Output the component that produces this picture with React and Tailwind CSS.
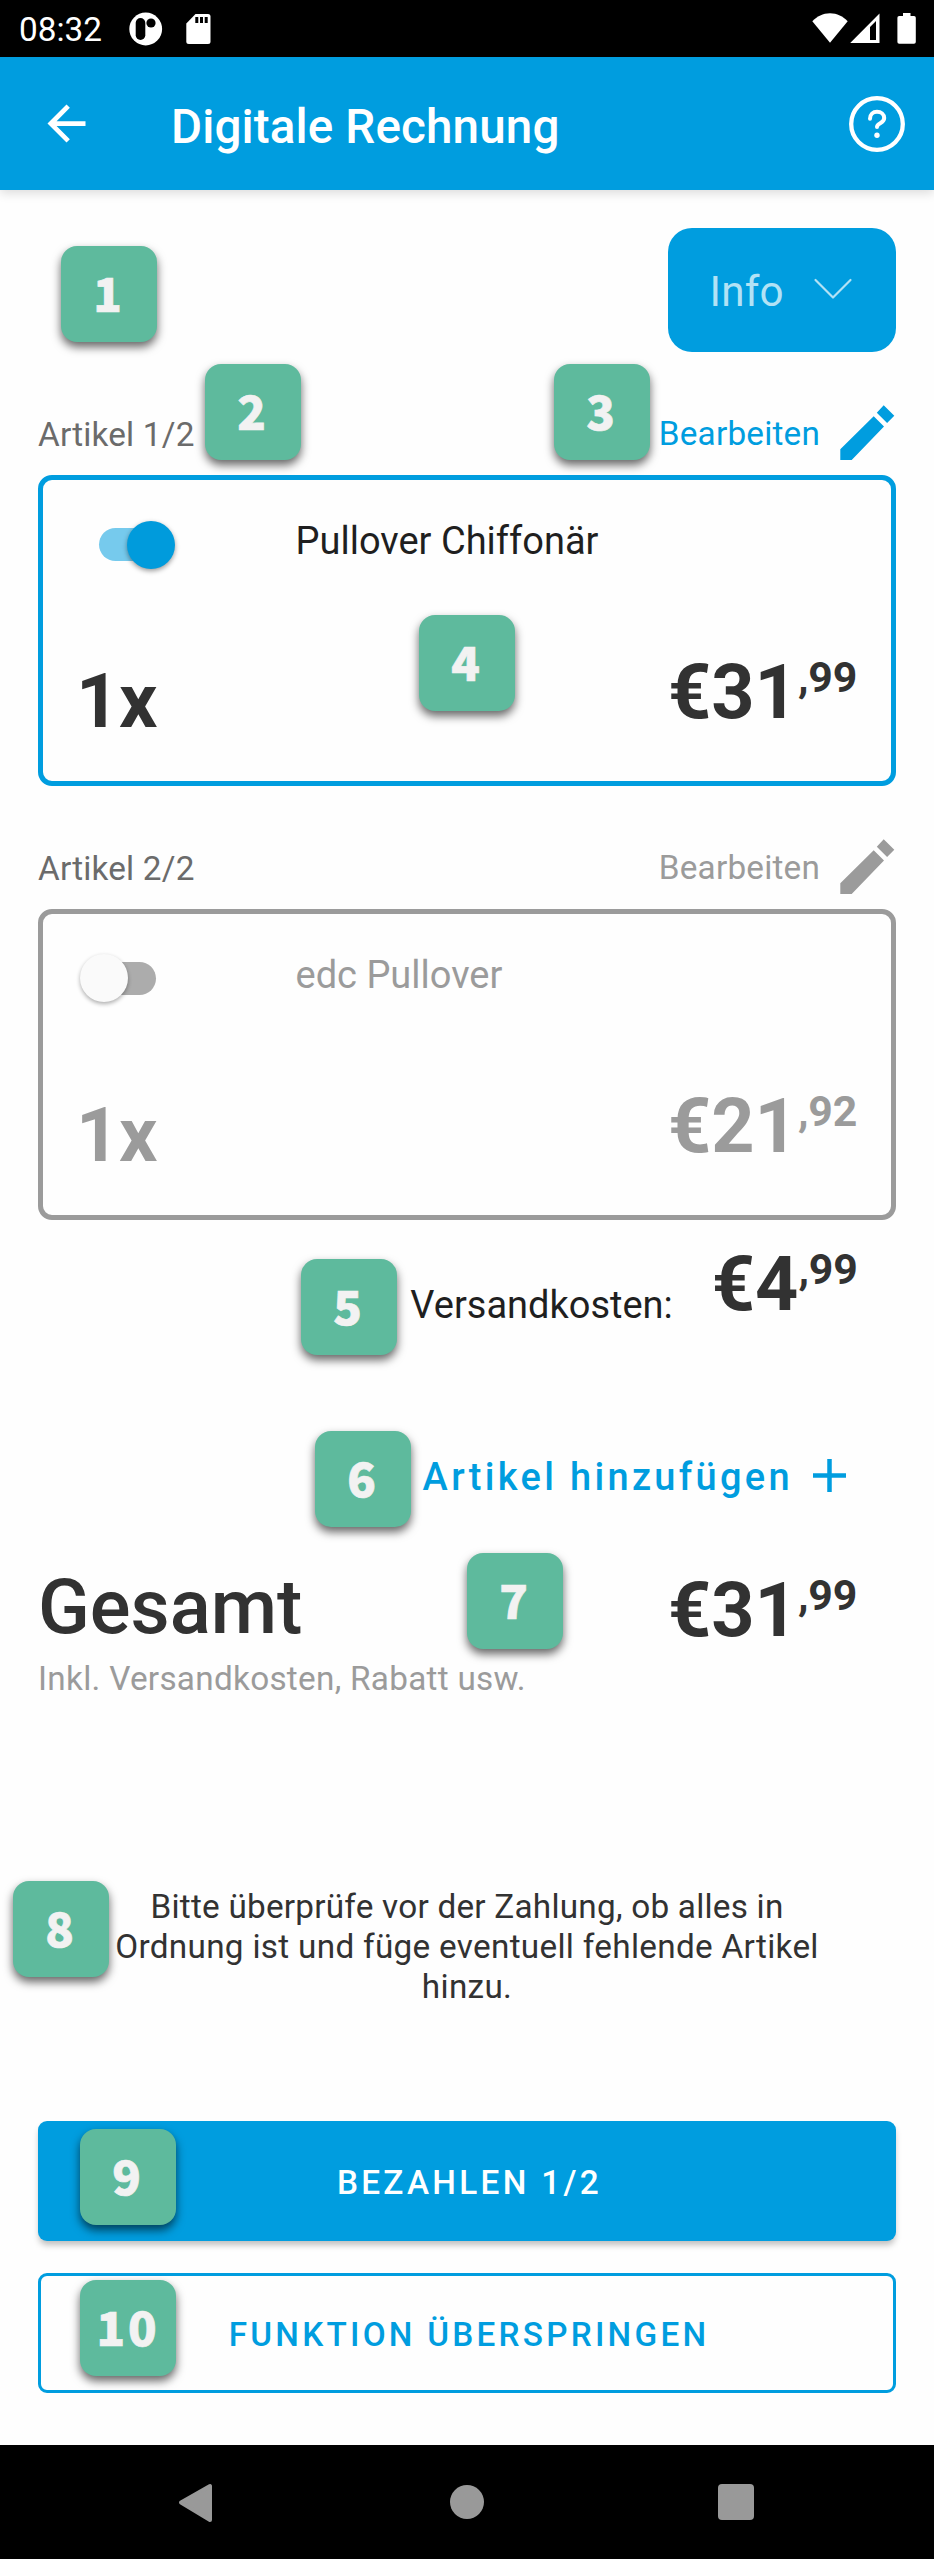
const badges = [
  { n: 1, pos: "left-[61px] top-[246px]" },
  { n: 2, pos: "left-[205px] top-[364px]" },
  { n: 3, pos: "left-[554px] top-[364px]" },
  { n: 4, pos: "left-[419px] top-[615px]" },
  { n: 5, pos: "left-[301px] top-[1259px]" },
  { n: 6, pos: "left-[315px] top-[1431px]" },
  { n: 7, pos: "left-[467px] top-[1553px]" },
  { n: 8, pos: "left-[13px] top-[1881px]" },
  { n: 9, pos: "left-[80px] top-[2129px]" },
  { n: 10, pos: "left-[80px] top-[2280px]" },
];

function Badge({ n, pos }) {
  return (
    <div
      className={`absolute ${pos} flex h-24 w-24 justify-center rounded-[16px] bg-[#5eba9d] pt-[16px] font-['Noto_Sans_CJK_SC',sans-serif] text-[47px] leading-[60px] font-black tracking-[3px] text-[#f2f2f2] shadow-[0_5px_10px_rgba(0,0,0,0.6)] [-webkit-text-stroke:0.7px_#f2f2f2]`}
    >
      {n}
    </div>
  );
}

function StatusBar() {
  return (
    <div className="flex h-[57px] items-start bg-black pl-[19px] text-white">
      <span className="w-[110px] pt-[10px] text-[33.3px] leading-[40px]">08:32</span>
      <svg className="mt-3 h-[34px] w-[34px]" viewBox="0 0 34 34">
        <circle cx="16.7" cy="17" r="16.4" fill="#fff" />
        <rect x="6.7" y="6" width="9.6" height="22" rx="4.8" fill="#000" />
        <circle cx="22" cy="11" r="4.6" fill="#000" />
      </svg>
      <svg className="mt-[14px] ml-[23px] h-[30px] w-[25px]" viewBox="0 0 25 30">
        <path d="M9.5 0H22a2.5 2.5 0 0 1 2.5 2.5v25A2.5 2.5 0 0 1 22 30H2.800a2.500 2.500 0 0 1-2.500-2.500V9.500z" fill="#fff" />
        <path d="M9.300 3h3v6h-3zM14 3h3v6h-3zM18.700 3h3v6h-3z" fill="#000" />
      </svg>
      <svg className="mt-[13px] ml-auto h-[30px] w-[36px]" viewBox="0 0 36 30">
        <path d="M18 29.700L.3 8.300C5 3.500 11 .3 18 .3s13 3.200 17.700 8z" fill="#fff" />
      </svg>
      <svg className="mt-[13px] ml-[2px] h-[30px] w-[31px]" viewBox="0 0 31 30">
        <path fillRule="evenodd" d="M.2 30L29.500.5V30zM20 14v13h6V8z" fill="#fff" />
      </svg>
      <svg className="mt-[13px] mr-[18px] ml-[16px] h-[31px] w-[19px]" viewBox="0 0 19 31">
        <path d="M6 0h7.500v3H17a1.800 1.800 0 0 1 1.800 1.800V29a1.800 1.800 0 0 1-1.800 1.800H2.200A1.800 1.800 0 0 1 .4 29V4.800A1.800 1.800 0 0 1 2.200 3H6z" fill="#fff" />
      </svg>
    </div>
  );
}

function AppBar() {
  return (
    <div className="flex h-[133px] items-center bg-[#009ddf] pl-[38px] pr-[27px] text-white shadow-[0_3px_10px_rgba(0,0,0,0.14)]">
      <svg className="h-[57px] w-[57px]" viewBox="0 0 24 24">
        <path d="M20 11H7.830l5.590-5.590L12 4l-8 8 8 8 1.410-1.410L7.830 13H20v-2z" fill="#fff" />
      </svg>
      <h1 className="mt-[6px] ml-[76px] text-[47.6px] leading-[60px] font-medium tracking-[0.12px]">Digitale Rechnung</h1>
      <svg className="ml-auto h-[60px] w-[60px]" viewBox="0 0 60 60" fill="none" stroke="#fff">
        <circle cx="30" cy="30" r="25.800" strokeWidth="4.300" />
        <path d="M23 24.800c0-4.500 3-7 7-7s7.200 2.500 7.200 6.300c0 5.700-7.200 4.600-7.200 9" strokeWidth="4" strokeLinecap="round" />
        <circle cx="30" cy="41.300" r="2.700" fill="#fff" stroke="none" />
      </svg>
    </div>
  );
}

function Pencil() {
  return (
    <svg className="h-[56px] w-[55px]" viewBox="0 0 55 56" fill="currentColor">
      <path d="M.3 44.300L33.700 11.300 44 21.600 11.700 55H.3zM43.700.3l10.600 10.500-7.200 7.200L36.800 7.800z" />
    </svg>
  );
}

function Toggle({ on }) {
  return on ? (
    <div className="relative mt-[5px] ml-[56px] h-[48px] w-[76px] pt-[7px]">
      <div className="h-[33px] w-[66px] rounded-full bg-[#76caed]" />
      <div className="absolute top-0 right-0 h-12 w-12 rounded-full bg-[#009bdc] shadow-[0_2px_5px_rgba(0,0,0,0.4)]" />
    </div>
  ) : (
    <div className="relative mt-[4px] ml-[37px] h-[48px] w-[76px] pt-[8px]">
      <div className="ml-[10px] h-[33px] w-[66px] rounded-full bg-[#acacac]" />
      <div className="absolute top-0 left-0 h-12 w-12 rounded-full bg-[#fafafa] shadow-[0_2px_4px_rgba(0,0,0,0.32)]" />
    </div>
  );
}

function Price({ euros, cents }) {
  return (
    <div className="flex items-start font-bold">
      <span className="text-[75.5px] leading-[90px]">€{euros}</span>
      <span className="mt-[5px] text-[42.8px] leading-[50px] tracking-[-0.2px]">,{cents}</span>
    </div>
  );
}

function Article({ index, name, euros, cents, on }) {
  return (
    <section className="h-[434px]">
      <div className="flex h-[84px] items-start">
        <span className="pt-[24px] text-[33.3px] leading-[40px] tracking-[0.18px] text-[#6b6b6b]">
          Artikel {index}/2
        </span>
        <div className={`ml-auto flex items-start ${on ? "text-[#009ddf]" : "text-[#9b9b9b]"}`}>
          <span className="pt-[23px] pr-[20px] text-[33.3px] leading-[40px] tracking-[0.2px]">Bearbeiten</span>
          <div className="pt-[14px] pr-[1px]">
            <Pencil />
          </div>
        </div>
      </div>
      <div
        className={`h-[311px] rounded-[14px] border-5 ${on ? "border-[#009ddf]" : "border-[#9b9b9b] text-[#9b9b9b]"}`}
      >
        <div className="flex h-[167px] items-start pt-[36px]">
          <div className="w-[252.500px]">
            <Toggle on={on} />
          </div>
          <span className={`pt-px text-[38px] leading-[48px] ${on ? "text-[#1f1f1f]" : ""}`}>{name}</span>
        </div>
        <div className={`flex items-start justify-between pr-[34px] pl-[33px] ${on ? "text-[#323232]" : ""}`}>
          <span className="pt-[9px] text-[75.5px] leading-[90px] font-bold tracking-[-0.3px]">1x</span>
          <Price euros={euros} cents={cents} />
        </div>
      </div>
    </section>
  );
}

export default function App() {
  return (
    <div className="relative flex h-[2559px] w-[934px] flex-col overflow-hidden bg-[#fefefe] font-[Roboto,sans-serif]">
      <StatusBar />
      <AppBar />
      <main className="flex flex-1 flex-col px-[38px]">
        <div className="flex h-[201px] justify-end pt-[38px]">
          <button className="flex h-[124px] w-[228px] items-start rounded-[24px] bg-[#009ddf] pt-[37px] pl-[41.500px] text-[42.2px] leading-[54px] tracking-[0.2px] text-[#b2e2f5]">
            Info
            <svg className="mt-[13px] ml-[29px] h-[22px] w-[40px]" viewBox="0 0 40 22" fill="none" stroke="currentColor" strokeWidth="2.200" strokeLinecap="round" strokeLinejoin="round">
              <path d="M2.500 2L20 19.500 37.500 2" />
            </svg>
          </button>
        </div>

        <Article index={1} name="Pullover Chiffonär" euros="31" cents="99" on />
        <Article index={2} name="edc Pullover" euros="21" cents="92" />

        <div className="-mt-[20px] flex h-[202px] items-start justify-end pr-[38.500px] text-[#323232]">
          <span className="mt-[42px] mr-[39px] text-[38px] leading-[48px] text-[#1f1f1f]">Versandkosten:</span>
          <Price euros="4" cents="99" />
        </div>

        <div className="flex h-[122px] items-start justify-end pt-[12px] pr-[50px] text-[#009ddf]">
          <span className="text-[38px] leading-[48px] font-medium tracking-[3.320px]">Artikel hinzufügen</span>
          <svg className="mt-[6px] ml-[20px] h-[33px] w-[33px]" viewBox="0 0 33 33" stroke="currentColor" strokeWidth="4.500">
            <path d="M16.500 0v33M0 16.500h33" />
          </svg>
        </div>

        <div className="flex h-[97px] items-start justify-between pr-[39px] text-[#323232]">
          <h2 className="-mt-px text-[76.1px] leading-[90px] font-medium">Gesamt</h2>
          <div className="pt-[2px]">
            <Price euros="31" cents="99" />
          </div>
        </div>
        <p className="-mt-px h-[228px] text-[33.3px] leading-[40px] tracking-[0.28px] text-[#9b9b9b]">
          Inkl. Versandkosten, Rabatt usw.
        </p>

        <p className="h-[234px] text-center text-[33.3px] leading-[40px] tracking-[0.3px] text-[#323232]">
          <span className="tracking-[0.23px]">Bitte überprüfe vor der Zahlung, ob alles in</span>
          <br />
          Ordnung ist und füge eventuell fehlende Artikel
          <br />
          hinzu.
        </p>

        <button className="h-[120px] shrink-0 rounded-[9px] bg-[#009ddf] pt-[3px] pl-[5px] text-[33.3px] font-medium tracking-[3.320px] text-white shadow-[0_5px_6px_-1px_rgba(0,0,0,0.25)]">
          BEZAHLEN 1/2
        </button>
        <button className="mt-[32px] h-[120px] shrink-0 rounded-[9px] border-3 border-[#009ddf] pt-[3px] pl-[4px] text-[33.3px] font-medium tracking-[3.250px] text-[#009ddf]">
          FUNKTION ÜBERSPRINGEN
        </button>
      </main>

      <nav className="flex h-[114px] items-start bg-black pt-[38px] pl-[178px]">
        <svg className="h-[40px] w-[35px]" viewBox="0 0 35 40">
          <path d="M3 19.500L32 3v34z" fill="#999" stroke="#999" strokeWidth="4" strokeLinejoin="round" />
        </svg>
        <div className="mt-[2px] ml-[237px] h-[34px] w-[34px] rounded-full bg-[#999]" />
        <div className="mt-[1px] ml-[234px] h-[36px] w-[36px] rounded-[4px] bg-[#999]" />
      </nav>

      {badges.map((b) => (
        <Badge key={b.n} n={b.n} pos={b.pos} />
      ))}
    </div>
  );
}
